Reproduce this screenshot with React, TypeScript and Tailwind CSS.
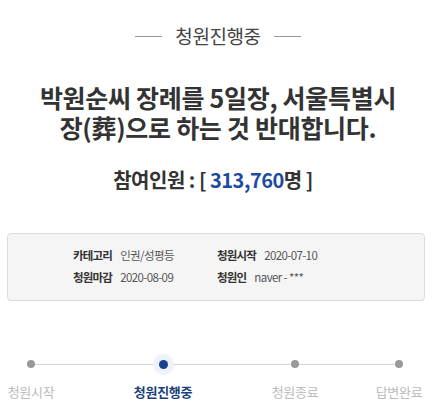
const font = { fontFamily: '"Noto Sans CJK KR", "Noto Sans", sans-serif' };

const info = [
  [
    { label: '카테고리', value: '인권/성평등' },
    { label: '청원시작', value: '2020-07-10' },
  ],
  [
    { label: '청원마감', value: '2020-08-09' },
    { label: '청원인', value: 'naver - ***' },
  ],
];

export default function App() {
  return (
    <div className="w-[436px] h-[417px] bg-white overflow-hidden flex flex-col items-center" style={font}>
      {/* Status header */}
      <div className="mt-[24px] flex items-center gap-[13px] h-[24px]">
        <span className="w-[27px] h-px bg-[#999]" />
        <span className="text-[19px] leading-[24px] text-[#444] tracking-[-0.4px]">청원진행중</span>
        <span className="w-[27px] h-px bg-[#999]" />
      </div>

      {/* Title */}
      <h1 className="mt-[34px] text-center text-[25px] leading-[30px] font-bold text-[#333] tracking-[-0.3px]">
        박원순씨 장례를 5일장, 서울특별시
        <br />
        장(葬)으로 하는 것 반대합니다.
      </h1>

      {/* Participants */}
      <p className="mt-[26px] -ml-[10px] text-[20px] leading-[24px] font-bold text-[#333] tracking-[-0.5px]">
        참여인원 : [ <span className="text-[#1e4ba0]">313,760</span>명 ]
      </p>

      {/* Info box */}
      <div className="mt-[41px] w-[418px] self-start ml-[7px] border border-[#dcdcdc] bg-[#f5f5f5] rounded-[4px] py-[11px] pl-[65px]">
        {info.map((row, i) => (
          <div key={i} className="flex h-[22px] items-center">
            {row.map((cell, j) => (
              <div key={j} className={`flex items-center ${j === 0 ? 'w-[144px]' : ''}`}>
                <span className="text-[11.5px] font-bold text-[#333] tracking-[-0.8px]">{cell.label}</span>
                <span className="ml-[8px] text-[11.5px] text-[#555] tracking-[-0.6px]">{cell.value}</span>
              </div>
            ))}
          </div>
        ))}
      </div>

      {/* Progress steps */}
      <div className="mt-[53px] self-start flex items-center h-[20px] pl-[27px]">
        <span className="w-[8px] h-[8px] rounded-full bg-[#999]" />
        <span className="w-[124px] h-px bg-[#d4d4d4]" />
        <span className="w-[9px] h-[9px] -mx-[0.5px] rounded-full bg-[#1a3f8f] shadow-[0_0_0_6px_#eef2fa] relative" />
        <span className="w-[124px] h-px bg-[#d4d4d4]" />
        <span className="w-[8px] h-[8px] rounded-full bg-[#999]" />
        <span className="w-[96px] h-px bg-[#d4d4d4]" />
        <span className="w-[8px] h-[8px] rounded-full bg-[#999]" />
      </div>
      <div className="mt-[9px] self-start flex text-[13px] leading-[18px] tracking-[-0.3px]">
        <span className="w-[62px] text-center text-[#bbb]">청원시작</span>
        <span className="ml-[69px] w-[64px] text-center font-bold text-[#1d3f7e]">청원진행중</span>
        <span className="ml-[68px] w-[64px] text-center text-[#bbb]">청원종료</span>
        <span className="ml-[40px] w-[64px] text-center text-[#bbb]">답변완료</span>
      </div>
    </div>
  );
}
